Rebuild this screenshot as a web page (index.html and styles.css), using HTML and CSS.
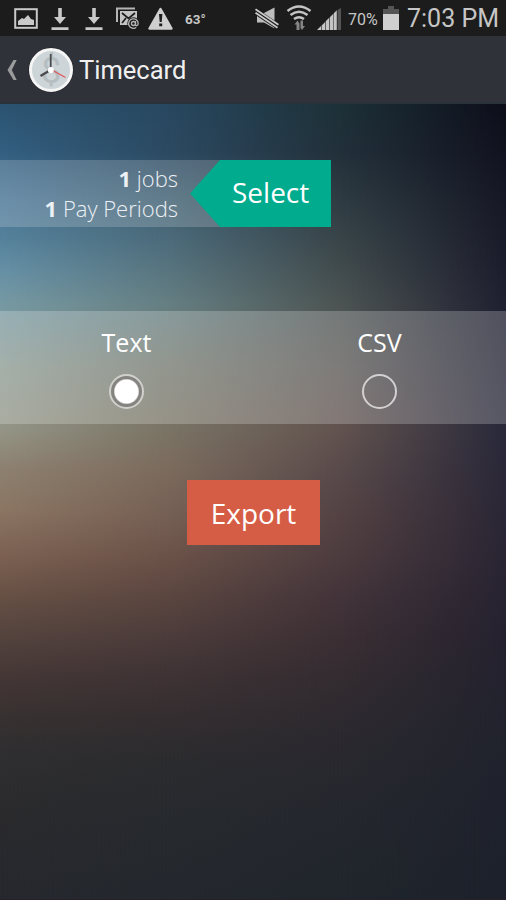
FILE: index.html
```html
<!DOCTYPE html>
<html lang="en">
<head>
    <meta charset="UTF-8">
    <meta name="viewport" content="width=device-width, initial-scale=1.0">
    <title>Timecard</title>
    <link rel="stylesheet" href="styles.css">
</head>
<body>
    <div class="status-bar">
        <svg class="status-icons" width="185" height="36" viewBox="0 0 185 36">
            <!-- picture -->
            <rect x="15.2" y="9.2" width="21.6" height="18.6" fill="none" stroke="#c9c9c9" stroke-width="2"/>
            <path d="M18 25v-4l4-3 2 1 4-4 3 4 3 1v5z" fill="#c9c9c9"/>
            <!-- downloads -->
            <path d="M58.2 8h3.6v9h4.2l-6 7-6-7h4.2zM51.5 27.3h17v2.7h-17z" fill="#c9c9c9"/>
            <path d="M92.2 8h3.6v9h4.2l-6 7-6-7h4.2zM85.5 27.3h17v2.7h-17z" fill="#c9c9c9"/>
            <!-- mail -->
            <path d="M117 22V8.5h18" fill="none" stroke="#b5b5b5" stroke-width="2"/>
            <path d="M120 11h17v9l-7 5h-10z" fill="#c4c4c4"/>
            <path d="M122 13l6.5 5.5L135 13M122 23l4-5" fill="none" stroke="#1c1c1c" stroke-width="1.7"/>
            <circle cx="133.5" cy="23.5" r="6.2" fill="#1c1c1c"/>
            <circle cx="133.5" cy="23.5" r="2" fill="none" stroke="#b5b5b5" stroke-width="1.3"/>
            <path d="M135.5 21v3.5c0 2 2.7 1.5 2.7-1a4.800 4.800 0 1 0-2 4" fill="none" stroke="#b5b5b5" stroke-width="1.3"/>
            <!-- warning -->
            <path d="M160.5 9l11 19.5h-22z" fill="#cfcfcf" stroke="#cfcfcf" stroke-width="2.4" stroke-linejoin="round"/>
            <path d="M159 14h3.4l-.7 8h-2zM159.2 23.5h3v2.8h-3z" fill="#1c1c1c"/>
        </svg>
        <span class="temperature">63&deg;</span>
        <svg class="signal-icons" width="92" height="36" viewBox="252 0 92 36">
            <!-- muted speaker -->
            <path d="M257 13h7l10.5-5.500v21l-10.500-6h-7z" fill="#bdbdbd"/>
            <path d="M255 11l23 15.500" stroke="#1c1c1c" stroke-width="6"/>
            <path d="M255.500 9.300l23 15.500M255.500 12.800l22 15" stroke="#c9c9c9" stroke-width="1.8"/>
            <!-- wifi -->
            <path d="M287.5 11q11.5-9 23 0M290.500 15q8.500-6.500 17 0M294 19q5-3.500 10 0" fill="none" stroke="#c4c4c4" stroke-width="2.5"/>
            <path d="M296.5 30v-5.5h-2l3-4 2 3v6.500zM300.500 20.500h2.500v5.500h2l-3 4-1.500-2z" fill="#858585"/>
            <!-- signal -->
            <path d="M317 30l4-4v4zM321.600 25.400l3.500-3.500V30h-3.500zM325.700 21.300l3.500-3.500V30h-3.500zM329.800 17.200l3.500-3.500V30h-3.500zM333.800 13.200l3-3V30h-3z" fill="#c4c4c4"/>
            <path d="M337.5 10l3.500-2v22h-3.500z" fill="#555"/>
        </svg>
        <span class="battery-level">70%</span>
        <svg class="battery" width="16" height="25" viewBox="0 0 16 25">
            <path d="M5 0h6v3h5v5H0V3h5z" fill="#555"/>
            <path d="M0 8h16v16H0z" fill="#cfcfcf"/>
        </svg>
        <span class="clock">7:03 PM</span>
    </div>

    <div class="action-bar">
        <svg class="back" width="12" height="22" viewBox="0 0 12 22">
            <path d="M7.500 1h3.200L5.800 11l4.900 10H7.500L1.500 11z" fill="#9a9b9d"/>
        </svg>
        <svg class="logo" width="46" height="46" viewBox="0 0 46 46">
            <circle cx="23" cy="23" r="22.5" fill="#202328"/>
            <circle cx="23" cy="23" r="20.5" fill="#cdd5d9" stroke="#f5f5f5" stroke-width="3"/>
            <text x="23" y="35.5" class="logo-dollar">$</text>
            <path d="M22.7 22.5V7" stroke="#4a4c4f" stroke-width="1.8"/>
            <path d="M22.5 23l-10 6" stroke="#4a4c4f" stroke-width="2.6"/>
            <path d="M23 22.5l14.5 8" stroke="#e2585c" stroke-width="1.3"/>
            <circle cx="22.8" cy="23" r="3" fill="#fff"/>
        </svg>
        <h1>Timecard</h1>
    </div>

    <div class="content">
        <div class="shade shade-right"></div>
        <div class="shade shade-center"></div>
        <div class="shade shade-left"></div>

        <div class="selection">
            <div class="selection-info">
                <div><b>1</b> jobs</div>
                <div><b>1</b> Pay Periods</div>
            </div>
            <div class="select-btn">Select</div>
        </div>

        <div class="formats">
            <div class="format">
                <span>Text</span>
                <div class="radio checked"></div>
            </div>
            <div class="format">
                <span>CSV</span>
                <div class="radio"></div>
            </div>
        </div>

        <div class="export-btn">Export</div>
    </div>
</body>
</html>
```
FILE: styles.css
```css
* {
    box-sizing: border-box;
}

body {
    margin: 0;
    height: 900px;
    display: flex;
    flex-direction: column;
    overflow: hidden;
    background: #1d212b;
    color: #ffffff;
    font-family: "Open Sans", "Noto Sans", sans-serif;
}

/* Status bar */
.status-bar {
    height: 36px;
    display: flex;
    align-items: center;
    flex-shrink: 0;
    background: #1c1c1c;
    color: #c6c6c6;
    font-family: Roboto, sans-serif;
    white-space: nowrap;
}

.status-icons {
    flex-shrink: 0;
}

.temperature {
    width: 67px;
    font-size: 13.5px;
    font-weight: bold;
    padding-top: 2px;
}

.signal-icons {
    flex-shrink: 0;
}

.battery-level {
    width: 39px;
    padding: 2px 0 0 4px;
    font-size: 16px;
}

.battery {
    margin-top: 1px;
    flex-shrink: 0;
}

.clock {
    margin-left: 8px;
    font-size: 25px;
    line-height: 36px;
    padding-top: 2px;
}

/* Action bar */
.action-bar {
    height: 68px;
    display: flex;
    align-items: center;
    flex-shrink: 0;
    padding-left: 6px;
    background: #2f3238;
    border-bottom: 1px solid #27333c;
}

.logo {
    margin-left: 10px;
}

.logo-dollar {
    font: 36px Roboto, sans-serif;
    fill: #b5bec1;
    text-anchor: middle;
}

.action-bar h1 {
    margin: 0 0 0 5px;
    font: 25.5px Roboto, sans-serif;
    color: #f0f0f0;
}

/* Content, four vertical gradients blended from left to right */
.content {
    position: relative;
    flex: 1;
    display: flex;
    flex-direction: column;
    align-items: flex-start;
    padding-top: 56px;
    border-bottom: 1px solid #281f2d;
    background: linear-gradient(#0d0e1a, #161825 12%, #1f2030 25%, #29293a 41%, #2b2736 50%, #2a2533 57%, #25222f 67%, #21232d 80%, #1e222c 90%, #1d212b);
}

.shade {
    position: absolute;
    inset: 0;
}

.shade-right {
    background: linear-gradient(#1d3138, #22303a 6%, #394549 17%, #4c5453 25%, #5a5755 33%, #62534f 41%, #58494a 47%, #544243 52%, #4d3c3f 57%, #43343a 62%, #3c2f34 67%, #342c31 72%, #2b292f 80%, #24272e 90%, #20262c);
    mask-image: linear-gradient(to right, #000 67%, transparent);
}

.shade-center {
    background: linear-gradient(#284860, #2c4a62 6%, #3f6072 12%, #4c6b7b 17%, #657f83 25%, #74796f 33%, #7a7465 41%, #7c6b5d 46%, #755f54 52%, #6b5248 57%, #5b4640 62%, #4c3c3b 67%, #3f3335 72%, #352e30 77%, #2c2c2f 82%, #272a2e 90%, #24282e);
    mask-image: linear-gradient(to right, #000 33%, transparent 67%);
}

.shade-left {
    background: linear-gradient(#2b5370, #335f80 6%, #4a7596 12%, #55829c 17%, #6690a5 21%, #7699a3 25%, #8b9a92 33%, #949586 41%, #8d8070 46%, #8b7663 51%, #7b6052 57%, #665044 62%, #54433e 67%, #443735 72%, #383131 77%, #2f2e30 82%, #2a2a2d 90%, #26282e);
    mask-image: linear-gradient(to right, #000, transparent 33%);
}

.selection,
.formats,
.export-btn {
    z-index: 1;
}

.selection {
    width: 331px;
    height: 67px;
    display: flex;
    background: linear-gradient(to right, rgba(255, 255, 255, 0.18) 220px, transparent 220px);
}

.selection-info {
    width: 190px;
    padding: 3px 12px 0 0;
    font-size: 22px;
    font-weight: 300;
    line-height: 30px;
    text-align: right;
    color: #edf1f5;
}

.selection-info b {
    font-weight: 700;
}

.select-btn {
    width: 141px;
    padding-left: 42px;
    font-size: 28px;
    line-height: 65px;
    background: #00ab8e;
    clip-path: polygon(0 50%, 30px 0, 100% 0, 100% 100%, 30px 100%);
}

.formats {
    width: 100%;
    height: 113px;
    margin-top: 84px;
    display: flex;
    background: rgba(255, 255, 255, 0.22);
}

.format {
    flex: 1;
    display: flex;
    flex-direction: column;
    align-items: center;
    padding-top: 13px;
    font-size: 25px;
    line-height: 36px;
}

.radio {
    width: 35px;
    height: 35px;
    margin-top: 14px;
    border: 2px solid #d2d0d1;
    border-radius: 50%;
}

.radio.checked {
    border-color: #d0d0cd;
    background: radial-gradient(circle, #ffffff 11.5px, #84837f 13px);
}

.export-btn {
    width: 133px;
    height: 65px;
    margin: 56px 0 0 187px;
    background: #d65d45;
    font-size: 28px;
    line-height: 66px;
    text-align: center;
}
```
